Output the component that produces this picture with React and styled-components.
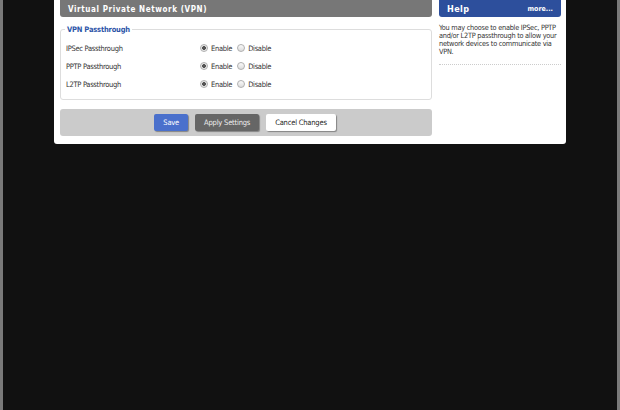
import styled, { createGlobalStyle } from "styled-components";

const Global = createGlobalStyle`
  html, body {
    margin: 0;
    background: #111;
    font-family: "DejaVu Sans Condensed", "DejaVu Sans", Verdana, sans-serif;
  }
`;

const Screen = styled.div`
  height: 410px;
  overflow: hidden;
  box-sizing: border-box;
  border-left: 3px solid #7a7a7a;
  border-right: 3px solid #7a7a7a;
  background: #111;
`;

const Panel = styled.div`
  margin: -4px 0 0 51px;
  width: 512px;
  box-sizing: border-box;
  background: #fff;
  border-radius: 3px;
  padding: 0 5px 8px 6px;
  display: grid;
  grid-template-columns: 372px 122px;
  column-gap: 7px;
`;

const Main = styled.div`
  display: flex;
  flex-direction: column;
`;

const TitleBar = styled.div`
  height: 21px;
  box-sizing: border-box;
  padding: 5px 0 0 8px;
  background: ${(p) => p.$bg};
  color: #fff;
  font-weight: bold;
  font-size: ${(p) => p.$size || 8}px;
  letter-spacing: ${(p) => p.$spacing ?? 0.6}px;
  border-radius: 0 0 3px 3px;
  display: flex;
  justify-content: space-between;
  align-items: center;
`;

const More = styled.span`
  font-size: 7px;
  letter-spacing: 0;
  padding-right: 8px;
`;

const Fieldset = styled.fieldset`
  margin: 8px 0 0;
  padding: 5px 0 6px 5px;
  border: 1px solid #ddd;
  border-radius: 3px;
`;

const Legend = styled.legend`
  color: #2d55a8;
  font-weight: bold;
  font-size: 7.5px;
  letter-spacing: -0.2px;
  padding: 0 2px;
  margin-left: -1px;
`;

const Row = styled.div`
  display: flex;
  align-items: center;
  height: 18px;
  font-size: 7.5px;
  letter-spacing: -0.3px;
  color: #333;
`;

const Label = styled.span`
  width: 134px;
`;

const Radio = styled.span`
  width: 8px;
  height: 8px;
  border-radius: 50%;
  box-sizing: border-box;
  border: 1px solid #b0b0b0;
  background: ${(p) =>
    p.$on
      ? "radial-gradient(circle, #555 0 1.6px, #e8e8e8 2.2px)"
      : "linear-gradient(#fafafa, #dcdcdc)"};
  margin-right: 3px;
`;

const Choice = styled.span`
  margin-right: 5px;
`;

const ButtonBar = styled.div`
  margin-top: 9px;
  height: 27px;
  background: #cbcbcb;
  border-radius: 3px;
  display: flex;
  align-items: center;
  justify-content: center;
  gap: 7px;
  padding-right: 2px;
`;

const Button = styled.button`
  height: 17px;
  padding: 0 ${(p) => p.$pad || 9}px;
  font-family: inherit;
  font-size: 7.5px;
  letter-spacing: -0.2px;
  border: none;
  border-radius: 2px;
  background: ${(p) => p.$bg};
  color: ${(p) => p.$fg};
  box-shadow: 1px 1px 1px rgba(0, 0, 0, 0.35);
`;

const Side = styled.div`
  display: flex;
  flex-direction: column;
`;

const HelpText = styled.p`
  margin: 7px 0 0;
  padding-bottom: 8px;
  font-size: 7.3px;
  letter-spacing: -0.25px;
  line-height: 8px;
  color: #333;
  border-bottom: 1px dotted #ccc;
`;

const rows = ["IPSec Passthrough", "PPTP Passthrough", "L2TP Passthrough"];

export default function App() {
  return (
    <>
      <Global />
      <Screen>
        <Panel>
          <Main>
            <TitleBar $bg="#777">Virtual Private Network (VPN)</TitleBar>
            <Fieldset>
              <Legend>VPN Passthrough</Legend>
              {rows.map((r) => (
                <Row key={r}>
                  <Label>{r}</Label>
                  <Radio $on />
                  <Choice>Enable</Choice>
                  <Radio />
                  <Choice>Disable</Choice>
                </Row>
              ))}
            </Fieldset>
            <ButtonBar>
              <Button $bg="#4a70cc" $fg="#fff" $pad={9}>Save</Button>
              <Button $bg="#666" $fg="#eee">Apply Settings</Button>
              <Button $bg="#fff" $fg="#222">Cancel Changes</Button>
            </ButtonBar>
          </Main>
          <Side>
            <TitleBar $bg="#2d4f9c" $size={9} $spacing={0.4}>
              Help<More>more...</More>
            </TitleBar>
            <HelpText>
              You may choose to enable IPSec, PPTP and/or L2TP passthrough to allow your network devices to communicate via VPN.
            </HelpText>
          </Side>
        </Panel>
      </Screen>
    </>
  );
}
